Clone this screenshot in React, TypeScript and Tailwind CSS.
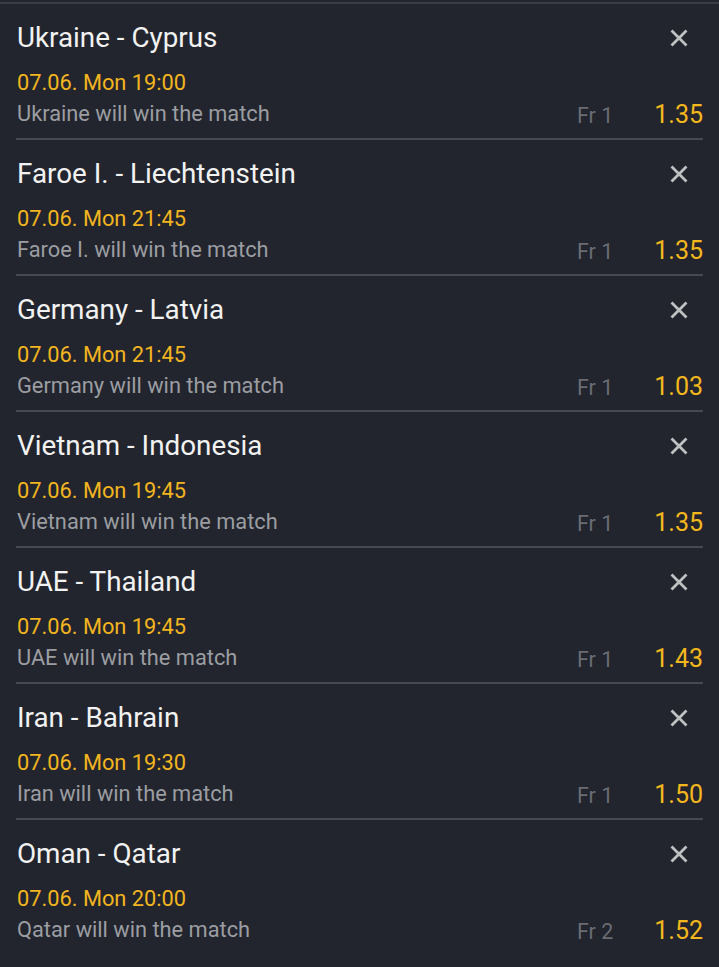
import React from "react";

const items = [
  { t: "Ukraine - Cyprus", d: "07.06. Mon 19:00", s: "Ukraine will win the match", f: "Fr 1", o: "1.35" },
  { t: "Faroe I. - Liechtenstein", d: "07.06. Mon 21:45", s: "Faroe I. will win the match", f: "Fr 1", o: "1.35" },
  { t: "Germany - Latvia", d: "07.06. Mon 21:45", s: "Germany will win the match", f: "Fr 1", o: "1.03" },
  { t: "Vietnam - Indonesia", d: "07.06. Mon 19:45", s: "Vietnam will win the match", f: "Fr 1", o: "1.35" },
  { t: "UAE - Thailand", d: "07.06. Mon 19:45", s: "UAE will win the match", f: "Fr 1", o: "1.43" },
  { t: "Iran - Bahrain", d: "07.06. Mon 19:30", s: "Iran will win the match", f: "Fr 1", o: "1.50" },
  { t: "Oman - Qatar", d: "07.06. Mon 20:00", s: "Qatar will win the match", f: "Fr 2", o: "1.52" },
];

function X() {
  return (
    <svg width="18" height="18" viewBox="0 0 18 18" className="block">
      <path d="M1.5 1.5 L16.5 16.5 M16.5 1.5 L1.5 16.5" stroke="#bfc0c2" strokeWidth="2.8" strokeLinecap="butt" />
    </svg>
  );
}

export default function App() {
  return (
    <div className="w-[719px] h-[967px] bg-[#22252d] overflow-hidden pt-[2px]" style={{ fontFamily: "Roboto, 'Noto Sans', sans-serif" }}>
      <div className="h-[2px] bg-[#3a3d45]" />
      {items.map((it, i) => (
        <div key={i} className="px-[16px]">
          <div className={`pt-[18px] pb-[10px] ${i < items.length - 1 ? "border-b-2 border-[#464951]" : ""}`}>
            <div className="flex items-center h-[32px]">
              <div className="flex-1 text-[27.8px] leading-[32px] text-[#f2f2f2] pl-[1px]">{it.t}</div>
              <div className="mr-[15px]"><X /></div>
            </div>
            <div className="mt-[15px] text-[21.8px] leading-[28px] text-[#f2b51f] pl-[1px]">{it.d}</div>
            <div className="mt-[3px] flex items-center h-[28px]">
              <div className="flex-1 text-[21.8px] leading-[28px] text-[#9b9da2] pl-[1px]">{it.s}</div>
              <div className="text-[21.5px] leading-[28px] text-[#696c73] mt-[3px]">{it.f}</div>
              <div className="ml-[41px] text-[25px] leading-[28px] text-[#f4b81d] mt-[2px]">{it.o}</div>
            </div>
          </div>
        </div>
      ))}
    </div>
  );
}
